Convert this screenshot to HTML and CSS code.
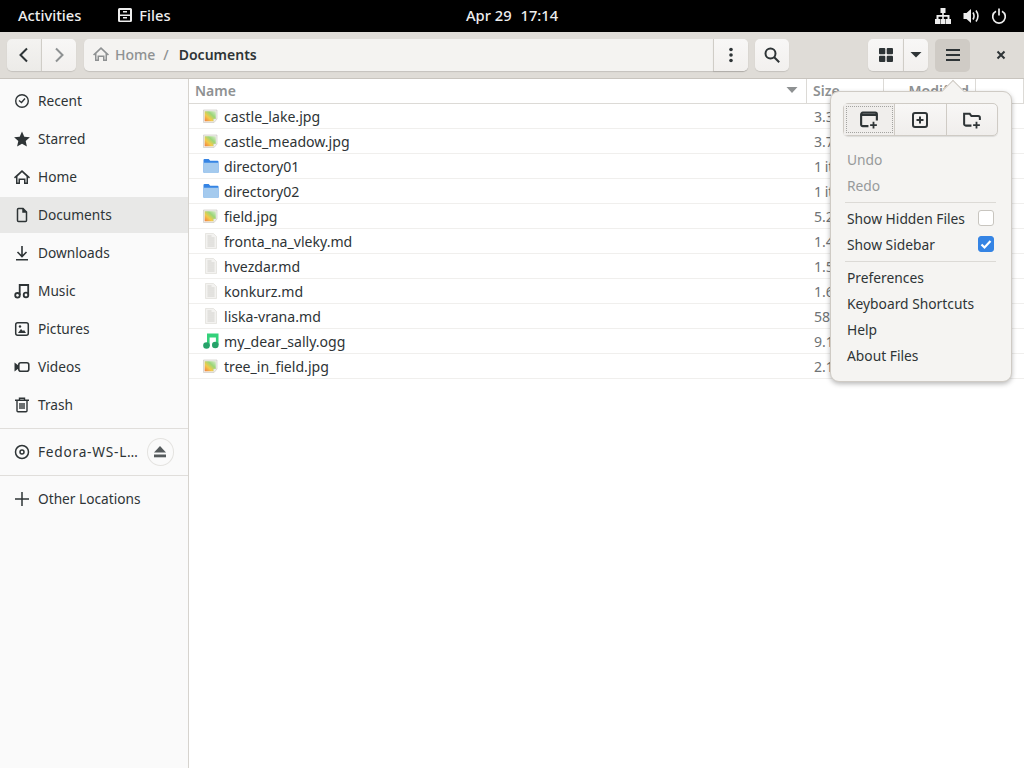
FILE: index.html
```html
<!DOCTYPE html>
<html lang="en">
<head>
  <meta charset="UTF-8">
  <title>Documents - Files</title>
  <link rel="stylesheet" href="styles.css">
</head>
<body>
  <svg class="defs" width="0" height="0" aria-hidden="true">
    <defs>
      <linearGradient id="pic" x1="0" y1="1" x2="1" y2="0">
        <stop offset="0" stop-color="#f07a40"/>
        <stop offset="0.35" stop-color="#f4cb4a"/>
        <stop offset="0.65" stop-color="#9bd67a"/>
        <stop offset="1" stop-color="#dcebd0"/>
      </linearGradient>
      <symbol id="i-image" viewBox="0 0 16 16">
        <path d="M0.500 2h13.500v9L11 14.500H0.500z" fill="#f1f0ed" stroke="#c6c3bc" stroke-width="0.6"/>
        <path d="M1.700 3.200h11.100v7.300l-2.300 2.800H1.700z" fill="url(#pic)"/>
        <path d="M14 11l-3.300 3.500v-3.500z" fill="#f4f4f2" stroke="#d6d3cd" stroke-width="0.5"/>
      </symbol>
      <symbol id="i-folder" viewBox="0 0 16 16">
        <path d="M0.500 2a1 1 0 0 1 1-1h4.200l1.500 1.700h7.300a1 1 0 0 1 1 1v10.300a1 1 0 0 1-1 1h-13a1 1 0 0 1-1-1z" fill="#3584e4"/>
        <path d="M0.500 4.700h15v9.300a1 1 0 0 1-1 1h-13a1 1 0 0 1-1-1z" fill="#a4caee"/>
      </symbol>
      <symbol id="i-text" viewBox="0 0 16 16">
        <path d="M2.500 0.500h8l3 3v12h-11z" fill="#f3f2f0" stroke="#e0ded9" stroke-width="0.7"/>
        <path d="M4.500 3h4M4.500 5h7M4.500 7h7M4.500 9h7M4.500 11h7M4.500 13h7" stroke="#cfcdc8" stroke-width="0.9"/>
      </symbol>
      <symbol id="i-audio" viewBox="0 0 16 16">
        <path d="M4 0.500h11.500V12h-2.600V4.500H6.600V13H4z" fill="#33d17a"/>
        <circle cx="3.500" cy="12.500" r="3.300" fill="#26a269"/>
        <circle cx="12.300" cy="12" r="3.300" fill="#26a269"/>
      </symbol>
    </defs>
  </svg>

  <div class="top-bar">
    <div class="top-left">
      <span class="activities">Activities</span>
      <span class="app-name">
        <svg width="16" height="16" viewBox="0 0 16 16"><path fill="#eee" fill-rule="evenodd" d="M2.500 1h11A1.500 1.500 0 0 1 15 2.500v11a1.500 1.500 0 0 1-1.500 1.500h-11A1.500 1.500 0 0 1 1 13.500v-11A1.500 1.500 0 0 1 2.500 1zM3 3v4.500h10V3zm0 6v4.500h10V9zm3 1h4v1.500H6zM6 4h4v1.500H6z"/></svg>
        Files
      </span>
    </div>
    <div class="clock"><span>Apr 29</span><span>17:14</span></div>
    <div class="tray">
      <svg width="16" height="16" viewBox="0 0 16 16" fill="#eee"><path d="M5.500 0h5v5h-1.700v2h5.700v4h1.500v5h-5v-5h1.500V8.800H8.800V11h1.700v5h-5v-5h1.700V8.800H3.500V11H5v5H0v-5h1.500V7h5.700V5H5.500z"/></svg>
      <svg width="16" height="16" viewBox="0 0 16 16" fill="#eee"><path d="M0.500 5h3L8 1v14l-4.500-4h-3z"/><path d="M10 4.500c1.300 2.200 1.300 4.800 0 7M13 2.500c2.400 3.400 2.400 7.600 0 11" fill="none" stroke="#eee" stroke-width="1.600"/></svg>
      <svg width="16" height="16" viewBox="0 0 16 16" fill="none" stroke="#eee" stroke-width="1.700"><path d="M5 3.200a6.300 6.300 0 1 0 6 0M8 0.500v7"/></svg>
    </div>
  </div>

  <div class="window">
    <header class="headerbar">
      <div class="btn-group">
        <button class="btn btn-back"><svg width="16" height="16" viewBox="0 0 16 16" fill="none" stroke="#2e3436" stroke-width="2"><path d="M11 1.500L4.500 8l6.500 6.500"/></svg></button>
        <button class="btn btn-forward"><svg width="16" height="16" viewBox="0 0 16 16" fill="none" stroke="#8e9192" stroke-width="2"><path d="M5 1.500L11.500 8 5 14.500"/></svg></button>
      </div>
      <div class="path-bar">
        <div class="path-crumbs">
          <svg width="16" height="16" viewBox="0 0 16 16" fill="#8e9192"><path fill-rule="evenodd" d="M8 1l8 7.500-1.100 1.100-.9-.8V15h-4v-4H6v4H2V8.800l-.9.8L0 8.500zM8 3.200L3.500 7.400v6.100H4.500V9.500h7v4H12.500V7.400z"/></svg>
          <span class="crumb-home">Home</span>
          <span class="crumb-sep">/</span>
          <span class="crumb-current">Documents</span>
        </div>
        <button class="btn path-menu"><svg width="16" height="16" viewBox="0 0 16 16" fill="#2e3436"><circle cx="8" cy="2.500" r="1.800"/><circle cx="8" cy="8" r="1.800"/><circle cx="8" cy="13.500" r="1.800"/></svg></button>
      </div>
      <button class="btn btn-search"><svg width="16" height="16" viewBox="0 0 16 16" fill="none" stroke="#2e3436" stroke-width="2"><circle cx="6.500" cy="6.500" r="5"/><path d="M10 10l5.200 5.200"/></svg></button>
      <div class="header-spacer"></div>
      <div class="btn-group">
        <button class="btn btn-grid"><svg width="16" height="16" viewBox="0 0 16 16" fill="#2e3436"><rect x="1" y="1" width="6.300" height="6.300" rx="1"/><rect x="8.700" y="1" width="6.300" height="6.300" rx="1"/><rect x="1" y="8.700" width="6.300" height="6.300" rx="1"/><rect x="8.700" y="8.700" width="6.300" height="6.300" rx="1"/></svg></button>
        <button class="btn btn-arrow"><svg width="12" height="12" viewBox="0 0 12 12" fill="#2e3436"><path d="M0.500 3h11L6 8.500z"/></svg></button>
      </div>
      <button class="btn btn-burger"><svg width="16" height="16" viewBox="0 0 16 16" fill="#2e3436"><rect x="1" y="2" width="14" height="2"/><rect x="1" y="7" width="14" height="2"/><rect x="1" y="12" width="14" height="2"/></svg></button>
      <button class="btn-close"><svg width="16" height="16" viewBox="0 0 16 16" fill="none" stroke="#2e3436" stroke-width="2"><path d="M4.500 4.500l7 7M11.500 4.500l-7 7"/></svg></button>
    </header>

    <div class="content">
      <nav class="sidebar">
        <a class="side-row"><svg width="16" height="16" viewBox="0 0 16 16" fill="none" stroke="#2e3436" stroke-width="1.400"><circle cx="8" cy="8" r="6.300"/><path d="M5 7.500l2.500 2L11 5.500"/></svg>Recent</a>
        <a class="side-row"><svg width="16" height="16" viewBox="0 0 16 16" fill="#2e3436"><path d="M8 0.500l2.300 5.200 5.600.6-4.200 3.700 1.200 5.500L8 12.700l-4.900 2.800 1.200-5.500L.1 6.300l5.600-.6z"/></svg>Starred</a>
        <a class="side-row"><svg width="16" height="16" viewBox="0 0 16 16" fill="#2e3436"><path fill-rule="evenodd" d="M8 1l8 7.200-1 1.200-1-.9V15h-4v-4H6v4H2V8.500l-1 .9-1-1.200zM8 3.300L3.500 7.400V13.500h1V9.500h7v4h1V7.400z"/></svg>Home</a>
        <a class="side-row side-row-active"><svg width="16" height="16" viewBox="0 0 16 16" fill="none" stroke="#2e3436" stroke-width="1.500"><path d="M3.500 2.500a1 1 0 0 1 1-1h4.500l3.500 3.500v8.500a1 1 0 0 1-1 1h-7a1 1 0 0 1-1-1z"/><path d="M9 1.500v3.500h3.500" fill="#2e3436"/></svg>Documents</a>
        <a class="side-row"><svg width="16" height="16" viewBox="0 0 16 16" fill="none" stroke="#2e3436" stroke-width="1.600"><path d="M8 1v10M3.500 7L8 11.500 12.500 7M2 14.800h12"/></svg>Downloads</a>
        <a class="side-row"><svg width="16" height="16" viewBox="0 0 16 16" fill="none" stroke="#2e3436" stroke-width="1.800"><path d="M5.700 12V2h8.500v9.500" /><circle cx="3.500" cy="12.300" r="2.300"/><circle cx="12" cy="12" r="2.300"/></svg>Music</a>
        <a class="side-row"><svg width="16" height="16" viewBox="0 0 16 16"><rect x="1.700" y="1.700" width="12.600" height="12.600" rx="2" fill="none" stroke="#2e3436" stroke-width="1.500"/><path d="M4 12l3-4 2 2 1-1 2 3z" fill="#2e3436"/><circle cx="6" cy="5.500" r="1.200" fill="#2e3436"/></svg>Pictures</a>
        <a class="side-row"><svg width="16" height="16" viewBox="0 0 16 16"><rect x="4.800" y="3.700" width="10" height="8.600" rx="2" fill="none" stroke="#2e3436" stroke-width="1.600"/><path d="M0.500 3.500l4 3v3l-4 3z" fill="#2e3436"/></svg>Videos</a>
        <a class="side-row"><svg width="16" height="16" viewBox="0 0 16 16" fill="none" stroke="#2e3436" stroke-width="1.400"><path d="M1 3.200h14M5.500 3V1.200h5V3M3 3.500v10.200a1 1 0 0 0 1 1h8a1 1 0 0 0 1-1V3.500M6 6v6M8 6v6M10 6v6"/></svg>Trash</a>
        <div class="side-sep side-sep-first"></div>
        <a class="side-row side-row-drive">
          <svg width="16" height="16" viewBox="0 0 16 16" fill="none" stroke="#2e3436"><circle cx="8" cy="8" r="6.500" stroke-width="1.500"/><circle cx="8" cy="8" r="2" stroke-width="1.500"/></svg>
          <span class="drive-name">Fedora-WS-L…</span>
          <span class="eject"><svg width="14" height="14" viewBox="0 0 14 14" fill="#555a5c"><path d="M7 1l6 6.500H1z"/><rect x="1" y="9.500" width="12" height="2.800"/></svg></span>
        </a>
        <div class="side-sep"></div>
        <a class="side-row side-row-other"><svg width="16" height="16" viewBox="0 0 16 16" fill="none" stroke="#2e3436" stroke-width="1.500"><path d="M8 1v14M1 8h14"/></svg>Other Locations</a>
      </nav>

      <main class="files">
        <div class="list-head">
          <div class="col-name">Name<svg width="12" height="12" viewBox="0 0 12 12" fill="#8e9192"><path d="M0.500 3h11L6 9z"/></svg></div>
          <div class="col-size">Size</div>
          <div class="col-mod">Modified</div>
          <div class="col-end"></div>
        </div>
        <div class="file-row"><svg class="file-icon"><use href="#i-image"/></svg><span class="file-name">castle_lake.jpg</span><span class="file-size">3.3 MB</span></div>
        <div class="file-row"><svg class="file-icon"><use href="#i-image"/></svg><span class="file-name">castle_meadow.jpg</span><span class="file-size">3.7 MB</span></div>
        <div class="file-row"><svg class="file-icon"><use href="#i-folder"/></svg><span class="file-name">directory01</span><span class="file-size">1 item</span></div>
        <div class="file-row"><svg class="file-icon"><use href="#i-folder"/></svg><span class="file-name">directory02</span><span class="file-size">1 item</span></div>
        <div class="file-row"><svg class="file-icon"><use href="#i-image"/></svg><span class="file-name">field.jpg</span><span class="file-size">5.2 MB</span></div>
        <div class="file-row"><svg class="file-icon"><use href="#i-text"/></svg><span class="file-name">fronta_na_vleky.md</span><span class="file-size">1.4 kB</span></div>
        <div class="file-row"><svg class="file-icon"><use href="#i-text"/></svg><span class="file-name">hvezdar.md</span><span class="file-size">1.5 kB</span></div>
        <div class="file-row"><svg class="file-icon"><use href="#i-text"/></svg><span class="file-name">konkurz.md</span><span class="file-size">1.6 kB</span></div>
        <div class="file-row"><svg class="file-icon"><use href="#i-text"/></svg><span class="file-name">liska-vrana.md</span><span class="file-size">58 kB</span></div>
        <div class="file-row"><svg class="file-icon"><use href="#i-audio"/></svg><span class="file-name">my_dear_sally.ogg</span><span class="file-size">9.1 MB</span></div>
        <div class="file-row"><svg class="file-icon"><use href="#i-image"/></svg><span class="file-name">tree_in_field.jpg</span><span class="file-size">2.1 MB</span></div>
      </main>
    </div>

    <div class="popover">
      <div class="pop-arrow"></div>
      <div class="pop-actions">
        <button class="pop-btn pop-btn-focus"><svg width="18" height="18" viewBox="0 0 16 16" fill="none" stroke="#2e3436" stroke-width="1.900"><path d="M7.500 13.500H2.500a1.500 1.500 0 0 1-1.500-1.500V3a1.500 1.500 0 0 1 1.500-1.500h11A1.500 1.500 0 0 1 15 3v5.500"/><path d="M1 3.500h14"/><path d="M12 9.500v6M9 12.500h6" stroke-width="1.600"/></svg></button>
        <button class="pop-btn"><svg width="16" height="16" viewBox="0 0 16 16" fill="none" stroke="#2e3436" stroke-width="2"><rect x="1" y="1" width="14" height="14" rx="2"/><path d="M8 4.500v7M4.500 8h7"/></svg></button>
        <button class="pop-btn"><svg width="18" height="18" viewBox="0 0 16 16" fill="none" stroke="#2e3436" stroke-width="1.800"><path d="M7.500 13H2.500A1.500 1.500 0 0 1 1 11.500V2.500h5l1.500 2h6A1.500 1.500 0 0 1 15 6v2"/><path d="M12 9.500v6M9 12.500h6" stroke-width="1.600"/></svg></button>
      </div>
      <div class="pop-item pop-item-off pop-first">Undo</div>
      <div class="pop-item pop-item-off">Redo</div>
      <div class="pop-sep"></div>
      <div class="pop-item">Show Hidden Files<span class="check"></span></div>
      <div class="pop-item">Show Sidebar<span class="check check-on"><svg width="12" height="12" viewBox="0 0 12 12" fill="none" stroke="#fff" stroke-width="2.200"><path d="M1.500 6.500l3 3 6-6.500"/></svg></span></div>
      <div class="pop-sep"></div>
      <div class="pop-item">Preferences</div>
      <div class="pop-item">Keyboard Shortcuts</div>
      <div class="pop-item">Help</div>
      <div class="pop-item">About Files</div>
    </div>
  </div>
</body>
</html>
```

FILE: styles.css
```css
* {
  box-sizing: border-box;
}

html,
body {
  height: 100%;
}

body {
  margin: 0;
  overflow: hidden;
  font-family: "Noto Sans", sans-serif;
  font-size: 14px;
  color: #2e3436;
  background-color: #fff;
}

svg {
  display: block;
  flex: none;
}

.defs {
  position: absolute;
}

/* shell top bar */
.top-bar {
  position: relative;
  display: flex;
  justify-content: space-between;
  align-items: center;
  height: 32px;
  padding: 0 17px 2px 18px;
  background-color: #000;
  color: #eee;
  font-size: 14.7px;
  font-weight: 500;
}

.top-left {
  display: flex;
  align-items: center;
  gap: 36px;
}

.app-name {
  display: flex;
  align-items: center;
  gap: 6px;
}

.clock {
  position: absolute;
  left: 466px;
  display: flex;
  gap: 9px;
}

.tray {
  display: flex;
  gap: 12px;
  margin-top: 2px;
}

/* window */
.window {
  position: relative;
  display: flex;
  flex-direction: column;
  height: 736px;
}

.headerbar {
  display: flex;
  align-items: center;
  flex: none;
  height: 47px;
  padding: 0 15px 0 7px;
  background-color: #dfdcd7;
  border-bottom: 1px solid #c8c4be;
}

.btn {
  display: flex;
  align-items: center;
  justify-content: center;
  height: 32px;
  padding: 0;
  border: none;
  border-radius: 5px;
  background: linear-gradient(#f8f7f6, #f2f0ee);
  box-shadow: 0 1px 1px rgba(0, 0, 0, 0.12);
}

.btn-group {
  display: flex;
}

.btn-group .btn:first-child {
  border-radius: 5px 0 0 5px;
}

.btn-group .btn:last-child {
  border-radius: 0 5px 5px 0;
  border-left: 1px solid #d0cdc7;
}

.btn-back {
  width: 34px;
  background: linear-gradient(#f4f3f1, #ecebe8);
}

.btn-forward {
  width: 35px;
}

.path-bar {
  display: flex;
  flex: none;
  width: 664px;
  height: 32px;
  margin-left: 8px;
  border-radius: 5px;
  background-color: #f4f3f1;
  box-shadow: 0 1px 1px rgba(0, 0, 0, 0.12);
}

.path-crumbs {
  display: flex;
  align-items: center;
  flex: 1;
  padding: 0 0 2px 9px;
  font-weight: 500;
}

.crumb-home {
  margin-left: 6px;
  color: #8e9192;
}

.crumb-sep {
  margin: 0 10px 0 8px;
  color: #8e9192;
}

.crumb-current {
  font-weight: 600;
}

.path-menu {
  width: 35px;
  border-left: 1px solid #d0cdc7;
  border-radius: 0 5px 5px 0;
}

.btn-search {
  width: 34px;
  margin-left: 7px;
}

.header-spacer {
  flex: 1;
}

.btn-grid {
  width: 35px;
}

.btn-arrow {
  width: 25px;
}

.btn-burger {
  width: 35px;
  height: 33px;
  margin-left: 7px;
  background: #cfcbc5;
  box-shadow: none;
}

.btn-close {
  display: flex;
  align-items: center;
  justify-content: center;
  width: 16px;
  height: 16px;
  margin-left: 23px;
  padding: 0;
  border: none;
  background: none;
}

.content {
  display: flex;
  flex: 1;
  min-height: 0;
}

/* sidebar */
.sidebar {
  flex: none;
  width: 189px;
  padding-top: 4px;
  background-color: #fafafa;
  border-right: 1px solid #d6d3ce;
  font-size: 13.7px;
}

.side-row {
  display: flex;
  align-items: center;
  gap: 8px;
  height: 36px;
  margin-bottom: 2px;
  padding: 0 0 2px 14px;
}

.side-row > svg {
  margin-top: 2px;
}

.side-row-active {
  background-color: #e8e8e7;
}

.side-sep {
  height: 1px;
  background-color: #e0dedb;
}

.side-sep-first {
  margin-top: 5px;
}

.side-row-drive {
  height: 46px;
  margin: 0;
  padding-right: 14px;
}

.drive-name {
  flex: 1;
  letter-spacing: 0.75px;
  white-space: nowrap;
}

.eject {
  display: flex;
  align-items: center;
  justify-content: center;
  width: 28px;
  height: 28px;
  margin-top: 2px;
  border: 1px solid #e4e3e0;
  border-radius: 50%;
}

.side-row-other {
  height: 46px;
}

/* file list */
.files {
  flex: 1;
  min-width: 0;
  font-size: 14.1px;
}

.list-head {
  display: flex;
  height: 25px;
  border-bottom: 1px solid #dcdad6;
  color: #8e9192;
  font-size: 14px;
  font-weight: 600;
}

.list-head > div {
  display: flex;
  align-items: center;
  padding-bottom: 2px;
  border-right: 1px solid #dcdad6;
}

.col-name {
  justify-content: space-between;
  width: 618px;
  padding: 0 8px 0 6px;
}

.col-size {
  width: 77px;
  padding-left: 6px;
}

.col-mod {
  justify-content: flex-end;
  width: 92px;
  padding-right: 6px;
}

.col-end {
  width: 48px;
  border-right: none;
}

.file-row {
  display: flex;
  align-items: center;
  height: 25px;
  padding-left: 14px;
  border-bottom: 1px solid #f0efed;
}

.file-icon {
  width: 16px;
  height: 16px;
}

.file-name {
  flex: none;
  width: 590px;
  margin-left: 5px;
}

.file-size {
  color: #6f7375;
  word-spacing: -1px;
}

/* main menu popover */
.popover {
  position: absolute;
  top: 59px;
  left: 830px;
  width: 182px;
  height: 291px;
  padding: 11px 13px 11px 12px;
  border: 1px solid #cfcbc5;
  border-radius: 9px;
  background-color: #f5f4f2;
  box-shadow: 0 2px 5px rgba(0, 0, 0, 0.28);
  font-size: 13.8px;
}

.pop-arrow {
  position: absolute;
  top: -9px;
  left: 114px;
  width: 16px;
  height: 16px;
  border-top: 1px solid #cfcbc5;
  border-left: 1px solid #cfcbc5;
  background-color: #f5f4f2;
  transform: rotate(45deg);
}

.pop-actions {
  position: relative;
  display: flex;
  height: 33px;
  border: 1px solid #cfcbc5;
  border-radius: 5px;
  background: linear-gradient(#f8f7f6, #f0eeec);
  box-shadow: 0 1px 1px rgba(0, 0, 0, 0.1);
}

.pop-btn {
  display: flex;
  flex: 1;
  align-items: center;
  justify-content: center;
  padding: 0;
  border: none;
  border-right: 1px solid #cfcbc5;
  background: none;
}

.pop-btn:last-child {
  border-right: none;
}

.pop-btn-focus {
  background-color: #f0eeec;
  outline: 1px dotted #a3a3a0;
  outline-offset: -3px;
}

.pop-item {
  display: flex;
  align-items: center;
  justify-content: space-between;
  height: 26px;
  padding: 0 4px;
  color: #2e3436;
  white-space: nowrap;
}

.pop-first {
  margin-top: 10px;
}

.pop-item-off {
  color: #979a9b;
}

.pop-sep {
  height: 1px;
  margin: 4px 2px 2px;
  background-color: #dcdad6;
}

.check {
  display: flex;
  align-items: center;
  justify-content: center;
  width: 16px;
  height: 16px;
  border: 1px solid #c8c5bf;
  border-radius: 3px;
  background-color: #fff;
}

.check-on {
  border-color: #3584e4;
  background-color: #3584e4;
}
```
